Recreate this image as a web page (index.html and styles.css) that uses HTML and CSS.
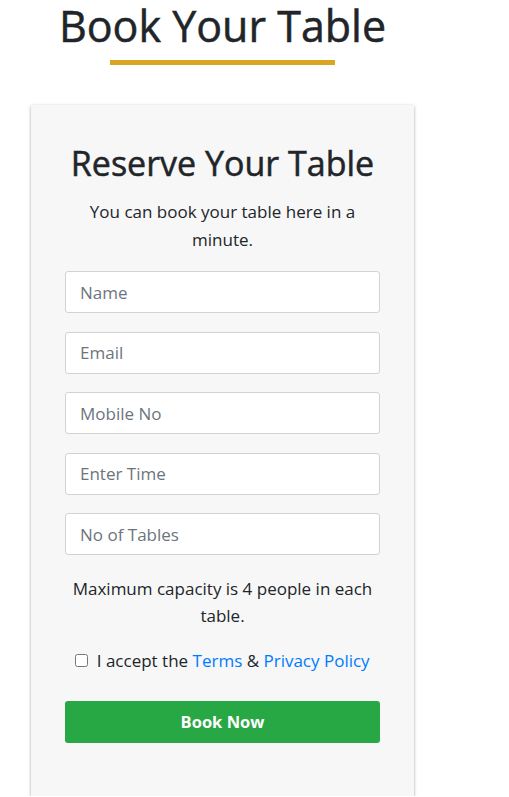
FILE: index.html
```html
<!DOCTYPE html>
<html lang="en">
<head>
<meta charset="utf-8">
<title>Book Your Table</title>
<link rel="stylesheet" href="styles.css">
</head>
<body>
<div class="wrap">
  <h1 class="page-title">Book Your Table</h1>
  <div class="title-line"></div>
  <div class="card">
    <h2 class="card-title">Reserve Your Table</h2>
    <p class="lead">You can book your table here in a minute.</p>
    <form class="form">
      <input class="field" type="text" placeholder="Name">
      <input class="field" type="email" placeholder="Email">
      <input class="field" type="text" placeholder="Mobile No">
      <input class="field" type="text" placeholder="Enter Time">
      <input class="field" type="text" placeholder="No of Tables">
      <p class="note">Maximum capacity is 4 people in each table.</p>
      <label class="accept"><input type="checkbox" class="check"> I accept the <a href="#">Terms</a> &amp; <a href="#">Privacy Policy</a></label>
      <button type="button" class="btn">Book Now</button>
    </form>
  </div>
</div>
</body>
</html>
```

FILE: styles.css
```css
* { box-sizing: border-box; }
body {
  margin: 0;
  font-family: "Open Sans", "Noto Sans", sans-serif;
  color: #212529;
  background: #fff;
}
.wrap {
  width: 445px;
  display: flex;
  flex-direction: column;
  align-items: center;
}
.page-title {
  margin: 0;
  font-size: 43px;
  font-weight: 400;
  line-height: 51px;
  -webkit-text-stroke: 0.5px #212529;
}
.title-line {
  width: 225px;
  height: 5px;
  background: #daa520;
  margin-top: 9px;
}
.card {
  margin-top: 40px;
  width: 383px;
  background: #f7f7f7;
  box-shadow: 0 1px 3px rgba(0,0,0,0.35);
  padding: 38px 34px 53px;
  display: flex;
  flex-direction: column;
  align-items: center;
  text-align: center;
}
.card-title {
  margin: 0;
  font-size: 34px;
  font-weight: 400;
  line-height: 40px;
  -webkit-text-stroke: 0.5px #212529;
}
.lead {
  margin: 15px 0 0;
  font-size: 17px;
  line-height: 28px;
  padding: 0 10px;
}
.form {
  width: 100%;
  display: flex;
  flex-direction: column;
  margin-top: 17px;
}
.field {
  height: 42px;
  border: 1px solid #ced4da;
  border-radius: 3px;
  background: #fff;
  padding: 0 14px;
  font-family: inherit;
  font-size: 17px;
  color: #495057;
  margin-bottom: 18.5px;
}
.field::placeholder { color: #6c757d; }
.note {
  margin: 1px 0 0;
  font-size: 17px;
  line-height: 27px;
}
.accept {
  margin-top: 20px;
  font-size: 17px;
  line-height: 24px;
  display: flex;
  align-items: center;
  justify-content: center;
  white-space: pre;
}
.check { margin: 0 4px 0 0; width: 13px; height: 13px; }
.accept a { color: #007bff; text-decoration: none; }
.btn {
  margin-top: 28px;
  height: 42px;
  border: none;
  border-radius: 3px;
  background: #28a745;
  color: #fff;
  font-family: inherit;
  font-weight: 700;
  font-size: 16.5px;
}
```
